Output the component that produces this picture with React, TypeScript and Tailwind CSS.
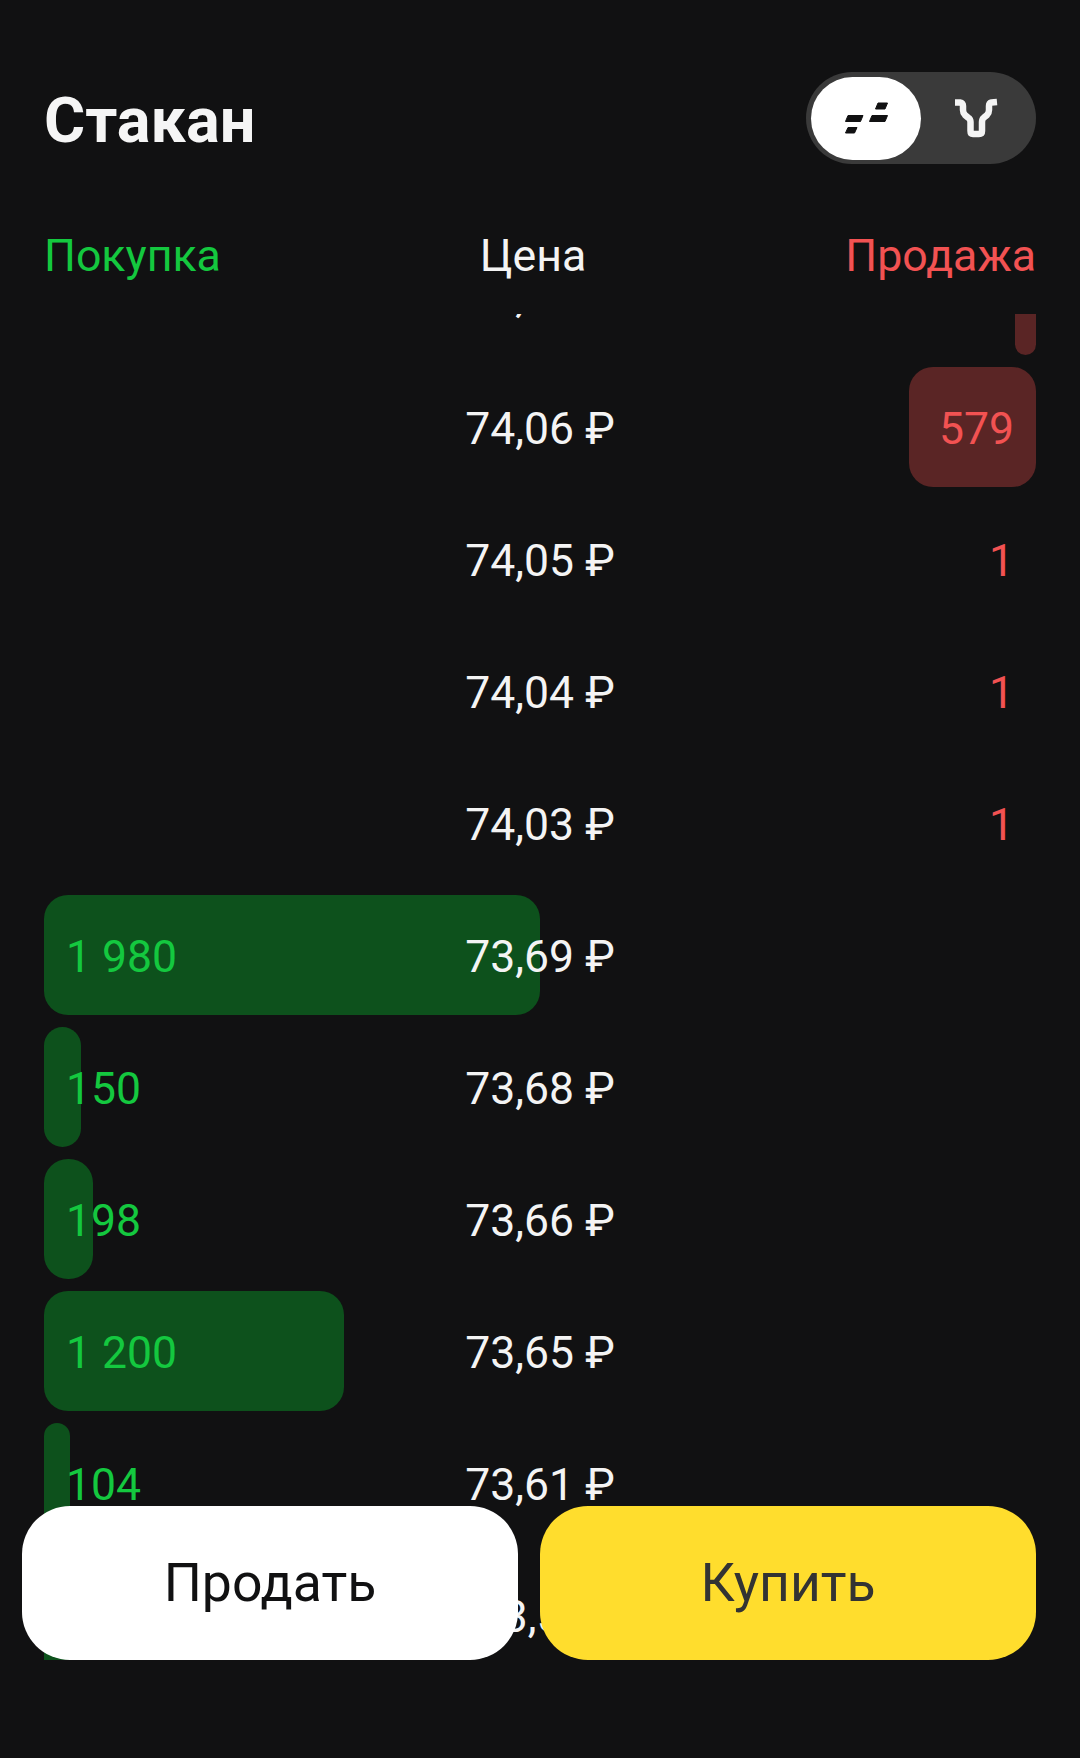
type Row = {
  price: string;
  buy?: string;
  buyWidth?: number;
  sell?: string;
  sellWidth?: number;
};

const rows: Row[] = [
  { price: "74,07 ₽", sellWidth: 21 },
  { price: "74,06 ₽", sell: "579", sellWidth: 127 },
  { price: "74,05 ₽", sell: "1" },
  { price: "74,04 ₽", sell: "1" },
  { price: "74,03 ₽", sell: "1" },
  { price: "73,69 ₽", buy: "1 980", buyWidth: 496 },
  { price: "73,68 ₽", buy: "150", buyWidth: 37 },
  { price: "73,66 ₽", buy: "198", buyWidth: 49 },
  { price: "73,65 ₽", buy: "1 200", buyWidth: 300 },
  { price: "73,61 ₽", buy: "104", buyWidth: 26 },
  { price: "73,5 ₽", buy: "120", buyWidth: 30 },
];

function OrderRow({ row }: { row: Row }) {
  return (
    <div className="relative mb-3 h-[120px] w-full shrink-0">
      {row.buyWidth ? (
        <div
          className="absolute left-0 top-0 h-full rounded-[24px] bg-[#0d511c]"
          style={{ width: row.buyWidth }}
        />
      ) : null}
      {row.sellWidth ? (
        <div
          className="absolute right-0 top-0 h-full rounded-[24px] bg-[#5a2525]"
          style={{ width: row.sellWidth }}
        />
      ) : null}
      <div className="relative flex h-full items-center justify-between px-[22px] pt-[5px] text-[44.5px] leading-none">
        <span className="text-[#14c83f]">{row.buy ?? ""}</span>
        <span className="text-[#f25252]">{row.sell ?? ""}</span>
      </div>
      <div className="absolute inset-0 flex items-center justify-center whitespace-nowrap pt-[5px] text-[44.5px] leading-none text-[#f4f4f4]">
        {row.price}
      </div>
    </div>
  );
}

export default function App() {
  return (
    <div
      className="relative h-[1758px] w-[1080px] overflow-hidden bg-[#111112]"
      style={{ fontFamily: "Roboto, sans-serif" }}
    >
      <header className="flex h-[314px] flex-col px-[44px] pt-[72px]">
        <div className="flex h-[92px] items-center justify-between">
          <h1 className="pt-[5px] text-[63px] font-bold leading-none text-[#f5f5f5]">Стакан</h1>
          <div className="flex h-[92px] w-[230px] items-center rounded-full bg-[#3a3a3a] pl-[5px]">
            <div className="flex h-[83px] w-[110px] items-center justify-center rounded-full bg-white">
              <svg width="46" height="34" viewBox="843 101 46 34" fill="#111112" stroke="#111112" strokeWidth="1" strokeLinejoin="round">
                <path d="M848 115.5 H863 L860.5 121.5 H845.5 Z" />
                <path d="M848 127.5 H857 L854.5 133 H845.5 Z" />
                <path d="M872 115.5 H887.5 L885 121.5 H869.5 Z" />
                <path d="M878 103 H887.5 L885 109 H875.5 Z" />
              </svg>
            </div>
            <div className="flex flex-1 items-center justify-center pr-[5px]">
              <svg width="52" height="46" viewBox="950 95 52 46" fill="none" stroke="#f4f4f4" strokeWidth="6.5" strokeLinecap="butt">
                <path d="M955 102.5 H960 Q963 103 963 106 V110 Q963 113 965 115 L968 117.5 Q970.5 119 970.5 122 V131 Q970.5 134 973 134 H979 Q982 134 982 131 V122 Q982 119 984 117.5 L987 115 Q989 113 989 110 V106 Q989 103 991.5 102.5 L997 102" />
              </svg>
            </div>
          </div>
        </div>
        <div className="mt-[70px] flex items-center justify-between text-[44.7px] leading-none">
          <span className="text-[#14c83f]">Покупка</span>
          <span className="text-[#f4f4f4]">Цена</span>
          <span className="text-[#f25252]">Продажа</span>
        </div>
      </header>

      <div className="h-[1346px] overflow-hidden px-[44px]">
        <div className="-mt-[79px] flex flex-col">
          {rows.map((row) => (
            <OrderRow key={row.price} row={row} />
          ))}
        </div>
      </div>

      <div className="absolute left-[22px] top-[1506px] flex h-[154px] w-[1014px] gap-[22px]">
        <button className="flex h-full flex-1 items-center justify-center rounded-[48px] bg-white text-[53.5px] text-[#111112]">
          Продать
        </button>
        <button className="flex h-full flex-1 items-center justify-center rounded-[48px] bg-[#ffdd2d] text-[53.5px] text-[#333333]">
          Купить
        </button>
      </div>
    </div>
  );
}
